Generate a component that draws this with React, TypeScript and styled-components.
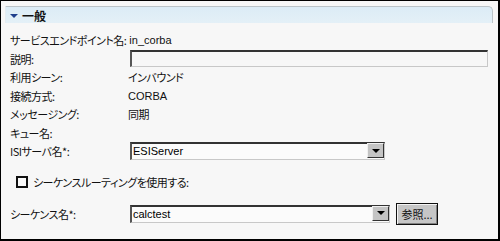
import styled, { createGlobalStyle } from 'styled-components';

const GlobalStyle = createGlobalStyle`
  * { box-sizing: border-box; }
  body {
    margin: 0;
    font-family: "Noto Sans CJK JP", "Liberation Sans", sans-serif;
    font-size: 11px;
    color: #111;
    background: #fff;
  }
`;

const Panel = styled.div`
  width: 500px;
  height: 241px;
  border: 1px solid #000;
  border-width: 1px 2px 2px 1px;
  background: #f7f7f7;
  padding: 5px 5px 0 4px;
  font-feature-settings: "palt";
  letter-spacing: -0.5px;
`;

const Header = styled.div`
  height: 17px;
  border: 1px solid #bcc4c8;
  border-bottom: none;
  border-left-color: #e4ecf1;
  border-radius: 0 5px 0 0;
  background: linear-gradient(#dcecf6, #e4f0f7);
  display: flex;
  align-items: center;
  gap: 4px;
  padding-left: 4px;
  font-weight: bold;
  font-size: 12px;
  letter-spacing: 0;
  color: #111;
`;

const Arrow = styled.span`
  width: 0;
  height: 0;
  border-left: 4px solid transparent;
  border-right: 4px solid transparent;
  border-top: 4px solid #1f3e8c;
  margin-top: 1px;
`;

const Form = styled.div`
  display: flex;
  flex-direction: column;
  padding: 8px 0 0 5px;
`;

const Row = styled.div<{ $h?: number }>`
  height: ${(p) => p.$h ?? 18.5}px;
  display: flex;
  align-items: center;
  white-space: nowrap;
`;

const Label = styled.span<{ $auto?: boolean }>`
  width: ${(p) => (p.$auto ? 'auto' : '118px')};
  margin-right: ${(p) => (p.$auto ? '3px' : '0')};
  flex-shrink: 0;
`;

const Value = styled.span`
  font-family: "Liberation Sans", "Noto Sans CJK JP", sans-serif;
  letter-spacing: 0;
`;

const JaValue = styled.span``;

const TextBox = styled.div<{ $w: number }>`
  width: ${(p) => p.$w}px;
  height: 17px;
  margin-left: 2px;
  border-top: 2px solid #333;
  border-left: 2px solid #555;
  border-right: 1px solid #c8c8c8;
  border-bottom: 1px solid #c8c8c8;
  background: #f7f7f7;
`;

const Select = styled.div<{ $w: number }>`
  width: ${(p) => p.$w}px;
  height: 18px;
  margin-left: 2px;
  display: flex;
  border-top: 2px solid #333;
  border-left: 2px solid #555;
  border-right: 1px solid #c8c8c8;
  border-bottom: 1px solid #c8c8c8;
  background: #fbfbfb;
`;

const SelectText = styled.span`
  flex: 1;
  font-family: "Liberation Sans", sans-serif;
  font-size: 11px;
  letter-spacing: 0;
  line-height: 14px;
  padding-left: 1px;
  color: #000;
`;

const DropButton = styled.span`
  width: 17px;
  height: 15px;
  margin-top: -1px;
  background: #c4c4c4;
  border: 1px solid;
  border-color: #f0f0f0 #333 #333 #f0f0f0;
  display: flex;
  align-items: center;
  justify-content: center;
  &::after {
    content: '';
    border-left: 4px solid transparent;
    border-right: 4px solid transparent;
    border-top: 4px solid #000;
  }
`;

const CheckRow = styled(Row)`
  padding-left: 6px;
  gap: 5px;
`;

const Check = styled.span`
  width: 12px;
  height: 12px;
  border: 2px solid #111;
  background: #fafafa;
`;

const Browse = styled.button`
  width: 42px;
  height: 22px;
  margin-left: 6px;
  padding: 0;
  font: inherit;
  font-size: 11px;
  letter-spacing: 0;
  color: #111;
  background: #c6c6c6;
  border: 1px solid #111;
  box-shadow: inset 1px 1px 0 #f4f4f4, inset -1px -1px 0 #808080;
`;

export default function App() {
  return (
    <>
      <GlobalStyle />
      <Panel>
        <Header>
          <Arrow />
          一般
        </Header>
        <Form>
          <Row>
            <Label $auto>サービスエンドポイント名:</Label>
            <Value>in_corba</Value>
          </Row>
          <Row>
            <Label>説明:</Label>
            <TextBox $w={358} />
          </Row>
          <Row>
            <Label>利用シーン:</Label>
            <JaValue>インバウンド</JaValue>
          </Row>
          <Row>
            <Label>接続方式:</Label>
            <Value>CORBA</Value>
          </Row>
          <Row>
            <Label>メッセージング:</Label>
            <JaValue>同期</JaValue>
          </Row>
          <Row>
            <Label>キュー名:</Label>
          </Row>
          <Row>
            <Label>ISIサーバ名*:</Label>
            <Select $w={255}>
              <SelectText>ESIServer</SelectText>
              <DropButton />
            </Select>
          </Row>
          <CheckRow $h={42}>
            <Check />
            シーケンスルーティングを使用する:
          </CheckRow>
          <Row $h={22}>
            <Label>シーケンス名*:</Label>
            <Select $w={260}>
              <SelectText>calctest</SelectText>
              <DropButton />
            </Select>
            <Browse>参照...</Browse>
          </Row>
        </Form>
      </Panel>
    </>
  );
}
